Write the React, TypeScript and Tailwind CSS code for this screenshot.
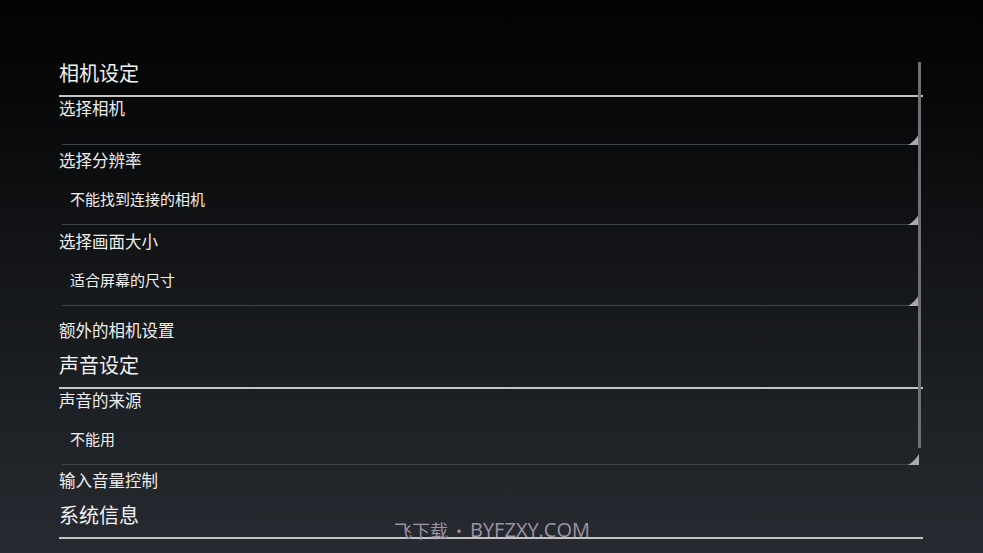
import React from 'react'

const font = { fontFamily: '"Noto Sans CJK SC", "Noto Sans", sans-serif' }

const Header = ({ title, className = '' }: { title: string; className?: string }) => (
  <div className={className}>
    <div className="text-[20px] leading-[26px] text-[#f2f2f2] pb-[9px]">{title}</div>
    <div className="h-[2px] bg-[#c4c4c4]" />
  </div>
)

// spinner area with the little corner triangle and bottom line
const Spinner = ({ value }: { value?: string }) => (
  <div className="relative ml-[3px] mr-[4px]">
    {value ? (
      <div className="pl-[8px] pt-[18px] pb-[15px] text-[15px] leading-[20px] text-[#f0f0f0]">{value}</div>
    ) : (
      <div className="h-[25px]" />
    )}
    <div className="h-px bg-[#3f4246]" />
    <svg className="absolute right-0 bottom-0" width="11" height="11" viewBox="0 0 11 11">
      <path d="M11 0 L11 11 L0 11 Q7 7 11 0 Z" fill="#a8aaad" />
    </svg>
  </div>
)

const Label = ({ text, className = '' }: { text: string; className?: string }) => (
  <div className={`text-[16.5px] leading-[22px] text-[#ededed] ${className}`}>{text}</div>
)

export default function App() {
  return (
    <div
      style={font}
      className="relative w-full h-[553px] overflow-hidden bg-gradient-to-b from-[#030303] via-[#141619] to-[#272b31]"
    >
      <div className="pl-[59px] pr-[60px] pt-[60px]">
        <Header title="相机设定" />

        <Label text="选择相机" />
        <Spinner />

        <Label text="选择分辨率" className="mt-[4px]" />
        <Spinner value="不能找到连接的相机" />

        <Label text="选择画面大小" className="mt-[5px]" />
        <Spinner value="适合屏幕的尺寸" />

        <Label text="额外的相机设置" className="pt-[13px] pb-[11px]" />

        <Header title="声音设定" />

        <Label text="声音的来源" />
        <Spinner value="不能用" />

        <Label text="输入音量控制" className="pt-[4px] pb-[11px]" />

        <Header title="系统信息" />
      </div>

      {/* scrollbar */}
      <div className="absolute left-[918px] top-[62px] w-[3px] h-[386px] bg-[#6e7073]" />

      {/* watermark */}
      <div className="absolute left-[394px] top-[517px] flex items-center whitespace-nowrap text-[#9c93a3]">
        <span className="text-[18px] leading-[26px]">飞下载</span>
        <span className="mx-[3px] text-[16px] leading-[26px]">•</span>
        <span className="text-[20px] leading-[26px]" style={{ fontFamily: '"Open Sans", sans-serif' }}>BYFZXY.COM</span>
      </div>
    </div>
  )
}
